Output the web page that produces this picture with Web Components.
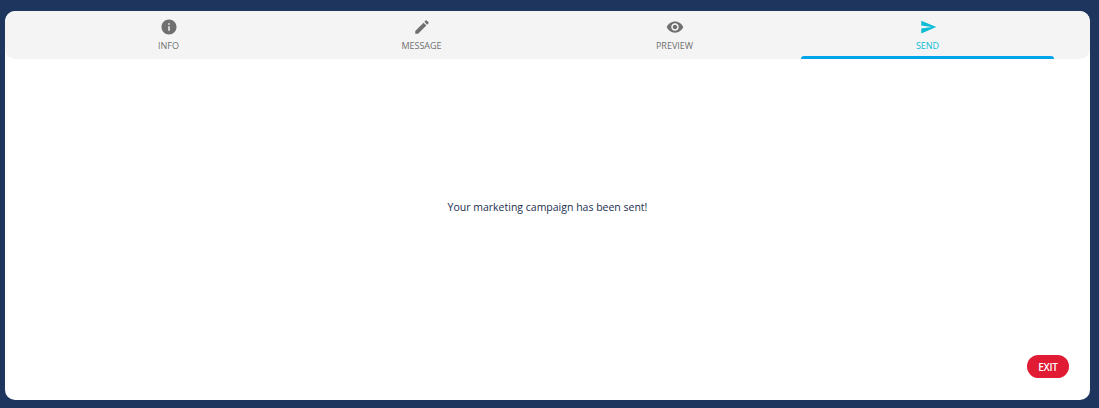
<!DOCTYPE html>
<html lang="en">
<head>
<meta charset="utf-8">
<title>Campaign sent</title>
<style>
  html, body { margin: 0; height: 100%; }
  body {
    background: #1e355e;
    font-family: "Open Sans", sans-serif;
    padding: 11px 9px 8px 5px;
    box-sizing: border-box;
    display: flex;
  }
</style>
</head>
<body>
<wizard-card>
  <wizard-tab slot="tabs" label="INFO" icon="info"></wizard-tab>
  <wizard-tab slot="tabs" label="MESSAGE" icon="edit"></wizard-tab>
  <wizard-tab slot="tabs" label="PREVIEW" icon="eye"></wizard-tab>
  <wizard-tab slot="tabs" label="SEND" icon="send" active></wizard-tab>
  Your marketing campaign has been sent!
  <exit-button slot="actions">EXIT</exit-button>
</wizard-card>

<script>
// Material icon paths, 24x24 viewBox
const ICONS = {
  info: 'M12 2C6.48 2 2 6.48 2 12s4.48 10 10 10 10-4.48 10-10S17.52 2 12 2zm1 15h-2v-6h2v6zm0-8h-2V7h2v2z',
  edit: 'M3 17.25V21h3.75L17.81 9.94l-3.75-3.75L3 17.25zM20.71 7.04c.39-.39.39-1.02 0-1.41l-2.34-2.34c-.39-.39-1.02-.39-1.41 0l-1.83 1.83 3.75 3.75 1.83-1.83z',
  eye: 'M12 4.5C7 4.5 2.73 7.61 1 12c1.73 4.39 6 7.5 11 7.5s9.27-3.11 11-7.5c-1.73-4.39-6-7.5-11-7.5zM12 17c-2.76 0-5-2.24-5-5s2.24-5 5-5 5 2.24 5 5-2.24 5-5 5zm0-8c-1.66 0-3 1.34-3 3s1.34 3 3 3 3-1.34 3-3-1.34-3-3-3z',
  send: 'M3 20.5L23 12 3 3.5 3 10l14 2-14 2z'
};

class WizardCard extends HTMLElement {
  constructor() {
    super();
    this.attachShadow({ mode: 'open' });
    this.shadowRoot.innerHTML = `
      <style>
        :host {
          flex: 1;
          display: flex;
          flex-direction: column;
          background: #fff;
          border-radius: 10px;
          overflow: hidden;
        }
        .tabs {
          display: grid;
          grid-template-columns: repeat(4, 253px);
          height: 48px;
          padding-left: 37px;
          background: #f4f4f4;
          border-radius: 10px;
        }
        .body {
          flex: 1;
          display: flex;
          align-items: center;
          justify-content: center;
          font-size: 10.5px;
          color: #22304f;
        }
        .actions {
          display: flex;
          justify-content: flex-end;
          padding: 0 21px 22px 0;
        }
      </style>
      <div class="tabs"><slot name="tabs"></slot></div>
      <div class="body"><slot></slot></div>
      <div class="actions"><slot name="actions"></slot></div>
    `;
  }
}

class WizardTab extends HTMLElement {
  constructor() {
    super();
    this.attachShadow({ mode: 'open' });
  }

  connectedCallback() {
    const path = ICONS[this.getAttribute('icon')] || '';
    this.shadowRoot.innerHTML = `
      <style>
        :host {
          display: flex;
          flex-direction: column;
          align-items: center;
          padding-top: 7px;
          color: #707070;
        }
        :host([active]) { color: #0cbcd6; }
        svg { width: 18px; height: 18px; fill: currentColor; display: block; }
        span {
          margin-top: 4px;
          font-size: 9px;
          font-weight: 500;
          line-height: 12px;
        }
        .bar {
          margin-top: auto;
          align-self: stretch;
          height: 3px;
          border-radius: 3px 3px 0 0;
        }
        :host([active]) .bar { background: #00a4ea; }
      </style>
      <svg viewBox="0 0 24 24" aria-hidden="true"><path d="${path}"/></svg>
      <span>${this.getAttribute('label')}</span>
      <div class="bar"></div>
    `;
  }
}

class ExitButton extends HTMLElement {
  constructor() {
    super();
    this.attachShadow({ mode: 'open' });
    this.shadowRoot.innerHTML = `
      <style>
        :host {
          display: flex;
          align-items: center;
          justify-content: center;
          width: 42px;
          height: 23px;
          border-radius: 12px;
          background: #e01b33;
          color: #fff;
          font-size: 10px;
          font-weight: 600;
          letter-spacing: -0.3px;
          cursor: pointer;
        }
      </style>
      <slot></slot>
    `;
  }
}

customElements.define('wizard-card', WizardCard);
customElements.define('wizard-tab', WizardTab);
customElements.define('exit-button', ExitButton);
</script>
</body>
</html>
